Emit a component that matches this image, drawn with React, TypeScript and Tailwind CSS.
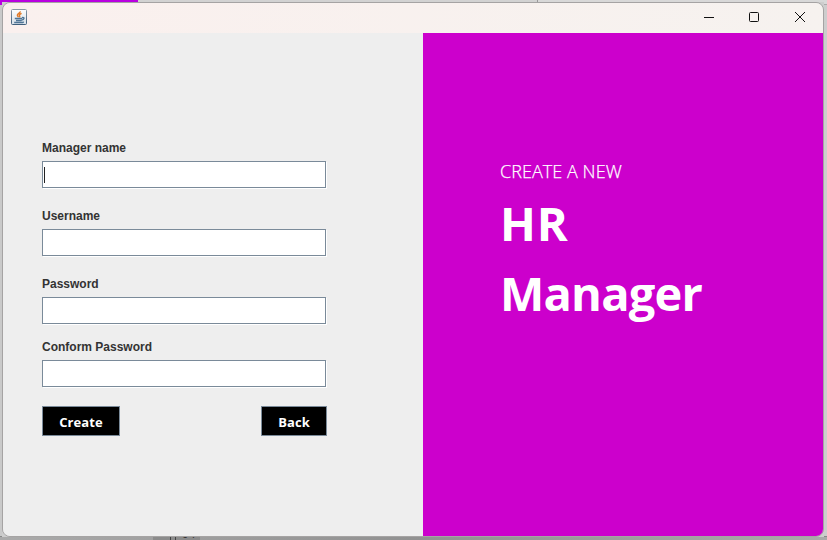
import type { ReactNode } from "react";

function JavaIcon() {
  return (
    <svg width="16" height="16" viewBox="0 0 16 16" fill="none">
      <defs>
        <linearGradient id="tile" x1="0" y1="0" x2="0" y2="1">
          <stop offset="0" stopColor="#fdfefe" />
          <stop offset="1" stopColor="#d5dfe8" />
        </linearGradient>
        <linearGradient id="edge" x1="0" y1="0" x2="0" y2="1">
          <stop offset="0" stopColor="#8797a6" />
          <stop offset="1" stopColor="#3f5f7c" />
        </linearGradient>
      </defs>
      <rect x="0.5" y="0.5" width="15" height="15" rx="1" fill="url(#tile)" stroke="url(#edge)" />
      <path d="M9.3 2.4C9.4 4 6.2 4.6 6.4 6.2c.1.8.8 1.2.8 2M10.6 4.4C9 5 8 5.8 8.6 6.8c.4.6.1 1-.2 1.5" stroke="#e27a28" strokeWidth="1.5" />
      <path d="M3.8 9.5h7.4M5 11.5h5.6M11 8.6c2.9-.6 2.6 2-.4 2.5M3.2 13.5h8.4l1.2-.6" stroke="#4f7596" strokeWidth="1.3" />
    </svg>
  );
}

function Field({ label, gap, caret }: { label: string; gap: string; caret?: boolean }) {
  return (
    <label className={`block ${gap}`}>
      <span className="block h-5 text-xs font-bold leading-[14px] text-[#333]">{label}</span>
      <span className="flex h-[27px] w-[284px] items-center border border-[#7a8a99] bg-white shadow-[1px_1px_0_#fff]">
        {caret && <span className="ml-px h-4 w-px bg-[#222]" />}
      </span>
    </label>
  );
}

function Button({ children, width }: { children: ReactNode; width: string }) {
  return (
    <button className={`${width} h-[30px] border border-[#7a8a99] bg-black pt-[3px] text-center font-['Open_Sans',sans-serif] text-[13px] font-bold leading-none tracking-[0.1px] text-white`}>
      {children}
    </button>
  );
}

export default function App() {
  return (
    <div className="flex h-[540px] w-[827px] flex-col overflow-hidden bg-[#cdcdcd] font-['Liberation_Sans',Arial,sans-serif]">
      <div className="flex h-[2px] shrink-0">
        <div className="w-[138px] bg-[#b900e0]" />
        <div className="w-[399px] bg-[#d2d2d2]" />
        <div className="w-px bg-[#999]" />
        <div className="grow bg-[#d8d8d8]" />
      </div>
      <div className="flex h-[535px] shrink-0 bg-[#cdcdcd]">
        <div className="w-[2px] border-b border-t-[3px] border-b-[#888] border-t-[#b900e0] bg-[#c9c9c9]" />
        <main className="flex w-[822px] shrink-0 flex-col overflow-hidden rounded-lg border border-[#a5a3a3]">
          <header className="flex h-[30px] shrink-0 items-center justify-between bg-gradient-to-r from-[#faf0ee] to-[#f6f2ef] pl-2">
            <div className="-mt-0.5"><JavaIcon /></div>
            <svg width="137" height="30" viewBox="686 3 137 30" fill="none" stroke="#111">
              <path d="M704 17.5h10" />
              <rect x="749.5" y="12.5" width="9" height="9" rx="1" />
              <path d="m795 12 10 10m0-10-10 10" />
            </svg>
          </header>
          <div className="flex grow">
            <section className="w-[420px] bg-[#eee] pl-[39px] pt-[108px]">
              <Field label="Manager name" gap="mb-[21px]" caret />
              <Field label="Username" gap="mb-[21px]" />
              <Field label="Password" gap="mb-4" />
              <Field label="Conform Password" gap="mb-[19px]" />
              <div className="flex w-[285px] justify-between">
                <Button width="w-[78px]">Create</Button>
                <Button width="w-[66px]">Back</Button>
              </div>
            </section>
            <section className="w-[400px] bg-[#c0c] pl-[77px] pt-[126px] font-['Open_Sans','Noto_Sans',sans-serif] text-white">
              <p className="text-lg font-light leading-6 tracking-[0.05px] [-webkit-text-stroke:0.25px_white]">CREATE A NEW</p>
              <h1 className="mt-[5px] text-[47px] font-bold leading-[70px]">
                <span className="tracking-[0.8px]">HR</span>
                <br />
                <span className="tracking-[-0.8px]">Manager</span>
              </h1>
            </section>
          </div>
        </main>
        <div className="flex grow flex-col border-b border-[#888] bg-[#cdcdcd]">
          <div className="h-[3px] border-b border-[#aaa] bg-[#d8d8d8]" />
        </div>
      </div>
      <footer className="flex h-[3px] shrink-0 overflow-hidden bg-gradient-to-r from-[#aaa] via-[#919191] to-[#aaa]">
        <div className="ml-[153px] flex w-[47px] bg-[#8b8b8b] pl-[17px]">
          <div className="w-[6px] border-x border-[#444]" />
          <span className="-mt-[9px] ml-1.5 text-xs leading-3 text-[#333]">94</span>
        </div>
      </footer>
    </div>
  );
}
